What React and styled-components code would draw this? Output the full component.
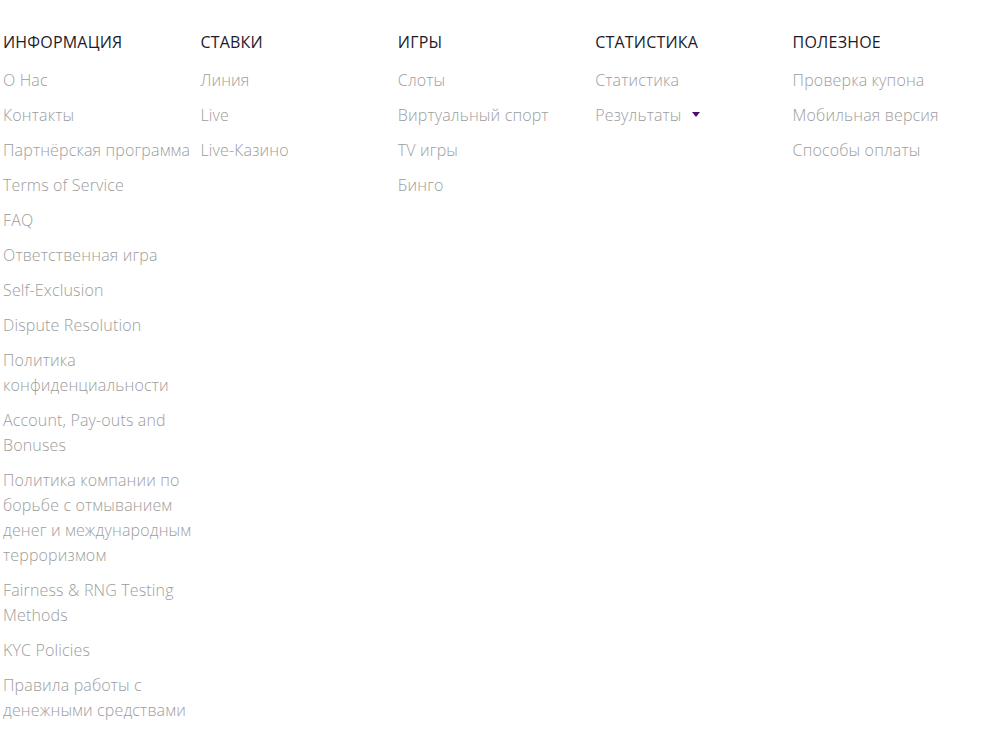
import React from 'react'
import styled, { createGlobalStyle } from 'styled-components'

const Global = createGlobalStyle`
  body {
    margin: 0;
    background: #fff;
    font-family: 'Open Sans', 'Liberation Sans', sans-serif;
  }
`

const Footer = styled.footer`
  display: grid;
  grid-template-columns: repeat(5, 1fr);
  width: 987px;
  padding: 30px 0 0 3px;
`

const Column = styled.div`
  display: flex;
  flex-direction: column;
  padding-right: 4px;
`

const Heading = styled.h4`
  margin: 0 0 13px;
  font-size: 16px;
  line-height: 25px;
  font-weight: 400;
  letter-spacing: 0.2px;
  color: #1d1b2b;
  text-transform: uppercase;
`

const LinkList = styled.ul`
  list-style: none;
  margin: 0;
  padding: 0;
  display: flex;
  flex-direction: column;
  gap: 10px;
`

const Link = styled.a`
  display: inline-flex;
  align-items: center;
  gap: 10px;
  font-size: 16px;
  line-height: 25px;
  font-weight: 300;
  letter-spacing: 0.15px;
  color: #9d9d9d;
  text-decoration: none;
`

const Caret = styled.span`
  width: 0;
  height: 0;
  border-left: 4px solid transparent;
  border-right: 4px solid transparent;
  border-top: 5px solid #4b0d73;
  margin-top: -2px;
`

const columns = [
  {
    title: 'Информация',
    links: [
      'О Нас',
      'Контакты',
      'Партнёрская программа',
      'Terms of Service',
      'FAQ',
      'Ответственная игра',
      'Self-Exclusion',
      'Dispute Resolution',
      'Политика конфиденциальности',
      'Account, Pay-outs and Bonuses',
      'Политика компании по борьбе с отмыванием денег и международным терроризмом',
      'Fairness & RNG Testing Methods',
      'KYC Policies',
      'Правила работы с денежными средствами',
    ],
  },
  { title: 'Ставки', links: ['Линия', 'Live', 'Live-Казино'] },
  { title: 'Игры', links: ['Слоты', 'Виртуальный спорт', 'TV игры', 'Бинго'] },
  { title: 'Статистика', links: ['Статистика', { label: 'Результаты', dropdown: true }] },
  { title: 'Полезное', links: ['Проверка купона', 'Мобильная версия', 'Способы оплаты'] },
]

const App = () => (
  <>
    <Global />
    <Footer>
      {columns.map((col) => (
        <Column key={col.title}>
          <Heading>{col.title}</Heading>
          <LinkList>
            {col.links.map((l) => {
              const item = typeof l === 'string' ? { label: l } : l
              return (
                <li key={item.label}>
                  <Link href="#">
                    {item.label}
                    {item.dropdown && <Caret />}
                  </Link>
                </li>
              )
            })}
          </LinkList>
        </Column>
      ))}
    </Footer>
  </>
)

export default App
